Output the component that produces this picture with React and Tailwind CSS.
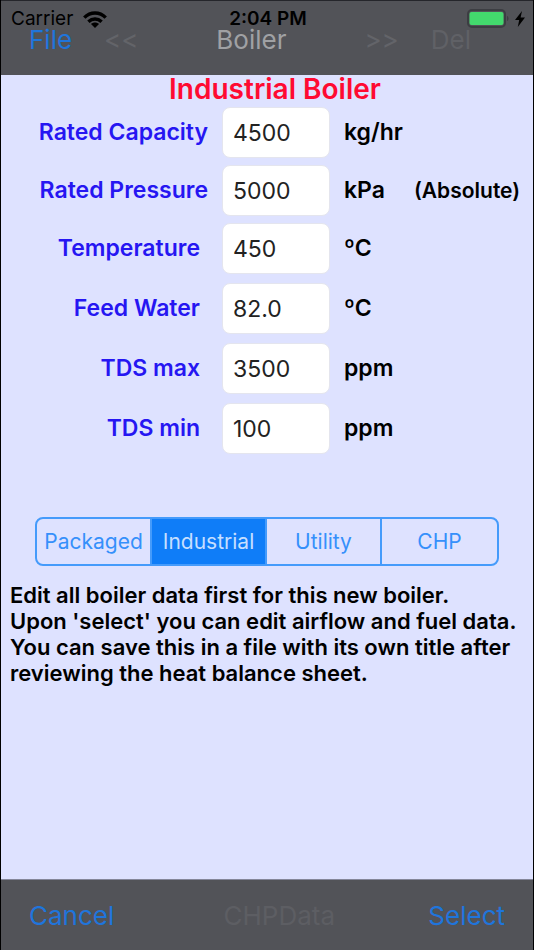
import React, { useState } from 'react';

const operatingFields = [
  { id: 'capacity', label: 'Rated Capacity', value: '4500', unit: 'kg/hr' },
  { id: 'pressure', label: 'Rated Pressure', value: '5000', unit: 'kPa', note: '(Absolute)' },
  { id: 'temperature', label: 'Temperature', value: '450', unit: 'ºC', inset: true },
];

const waterFields = [
  { id: 'feedWater', label: 'Feed Water', value: '82.0', unit: 'ºC', inset: true },
  { id: 'tdsMax', label: 'TDS max', value: '3500', unit: 'ppm', inset: true },
  { id: 'tdsMin', label: 'TDS min', value: '100', unit: 'ppm', inset: true },
];

const boilerTypes = ['Packaged', 'Industrial', 'Utility', 'CHP'];

const StatusBar = () => (
  <div className="absolute inset-x-0 top-0 grid h-9 grid-cols-3 items-center pl-[10px] pr-2 text-[19px] text-black">
    <div className="flex items-center gap-[10px]">
      <span>Carrier</span>
      <svg className="h-[17px] w-6" viewBox="0 0 24 17" fill="none" stroke="currentColor" strokeWidth="3.4">
        <path d="M1.3 6.6C7.3 0.4 16.7 0.4 22.7 6.6" />
        <path d="M5.4 10.7C9.3 7 14.7 7 18.6 10.7" />
        <path d="M12 17L8 13C10.2 11 13.8 11 16 13Z" fill="currentColor" stroke="none" />
      </svg>
    </div>
    <span className="text-center font-semibold">2:04 PM</span>
    <div className="flex items-center justify-end gap-[5px]">
      <svg className="h-5 w-[43px]" viewBox="0 0 43 20">
        <rect x="1" y="1" width="37" height="17" rx="4" fill="none" stroke="#3c3d42" strokeWidth="2" />
        <rect x="2.5" y="3" width="34" height="13" rx="2" fill="#43d96d" />
        <path d="M40 7C42 7.6 42 11.4 40 12Z" fill="#3c3d42" />
      </svg>
      <svg className="h-4 w-[10px]" viewBox="0 0 10 16" fill="currentColor">
        <path d="M7 0L0 9H4.2L2.8 16L10 6.6H5.6Z" />
      </svg>
    </div>
  </div>
);

const FieldRow = ({ field, value, onChange }) => (
  <div className="flex h-[51px] items-center">
    <label
      htmlFor={field.id}
      className={`w-[207px] text-right text-[23px] font-semibold text-[#2616f2] ${field.inset ? 'pr-2' : ''}`}
    >
      {field.label}
    </label>
    <input
      id={field.id}
      type="text"
      value={value}
      onChange={(e) => onChange(field.id, e.target.value)}
      className="ml-[14px] h-full w-[108px] rounded-lg border border-[#e4e5ee] bg-white px-[10px] text-[23px] text-[#222222] focus:outline-none"
    />
    <span className="ml-[14px] w-[70px] text-[23px] font-semibold text-black">{field.unit}</span>
    {field.note && <span className="text-[21px] font-semibold text-black">{field.note}</span>}
  </div>
);

const App = () => {
  const [values, setValues] = useState(
    Object.fromEntries([...operatingFields, ...waterFields].map((f) => [f.id, f.value]))
  );
  const [type, setType] = useState('Industrial');

  const handleChange = (id, value) => setValues((prev) => ({ ...prev, [id]: value }));

  return (
    <div className="flex min-h-screen flex-col border-x border-black bg-[#dee2ff] font-['Inter','Liberation_Sans',sans-serif]">
      <header className="relative border-t border-[#25262b] bg-[#525358]">
        <StatusBar />
        <nav className="flex h-[74px] items-center pt-[2px] pl-7 pr-[62px] text-[26px]">
          <button type="button" className="text-[#1f75dc]">File</button>
          <button type="button" disabled className="ml-8 text-[#636469]">&lt;&lt;</button>
          <h1 className="flex-1 text-center text-[#a0a1a4]">Boiler</h1>
          <button type="button" disabled className="mr-8 text-[#636469]">&gt;&gt;</button>
          <button type="button" disabled className="text-[#606166]">Del</button>
        </nav>
      </header>

      <main className="flex-1">
        <h2 className="pl-4 text-center text-[28px] leading-7 font-semibold text-[#ff0a32]">Industrial Boiler</h2>

        <div className="mt-1 flex flex-col gap-[7px]">
          {operatingFields.map((field) => (
            <FieldRow key={field.id} field={field} value={values[field.id]} onChange={handleChange} />
          ))}
        </div>
        <div className="mt-[9px] flex flex-col gap-[9px]">
          {waterFields.map((field) => (
            <FieldRow key={field.id} field={field} value={values[field.id]} onChange={handleChange} />
          ))}
        </div>

        <div
          role="group"
          aria-label="Boiler type"
          className="mx-[34px] mt-[63px] grid h-[49px] grid-cols-4 divide-x-2 divide-[#459bfb] overflow-hidden rounded-lg border-2 border-[#459bfb]"
        >
          {boilerTypes.map((name) => (
            <button
              key={name}
              type="button"
              aria-pressed={type === name}
              onClick={() => setType(name)}
              className={`text-[21px] ${type === name ? 'bg-[#0f7df8] text-[#c6dfff]' : 'text-[#3590fb]'}`}
            >
              {name}
            </button>
          ))}
        </div>

        <p className="mt-4 whitespace-pre-line pl-[9px] pr-2 text-[22px] leading-[26px] font-semibold text-black">
          {"Edit all boiler data first for this new boiler.\nUpon 'select' you can edit airflow and fuel data.\nYou can save this in a file with its own title after reviewing the heat balance sheet."}
        </p>
      </main>

      <footer className="flex h-[71px] items-center border-t border-[#85879a] bg-[#525358] px-7 text-[26px]">
        <button type="button" className="text-[#1f75dc]">Cancel</button>
        <div className="flex flex-1 justify-center pl-4">
          <button type="button" disabled className="text-[#5d5e63]">CHPData</button>
        </div>
        <button type="button" className="text-[#1f75dc]">Select</button>
      </footer>
    </div>
  );
};

export default App;
